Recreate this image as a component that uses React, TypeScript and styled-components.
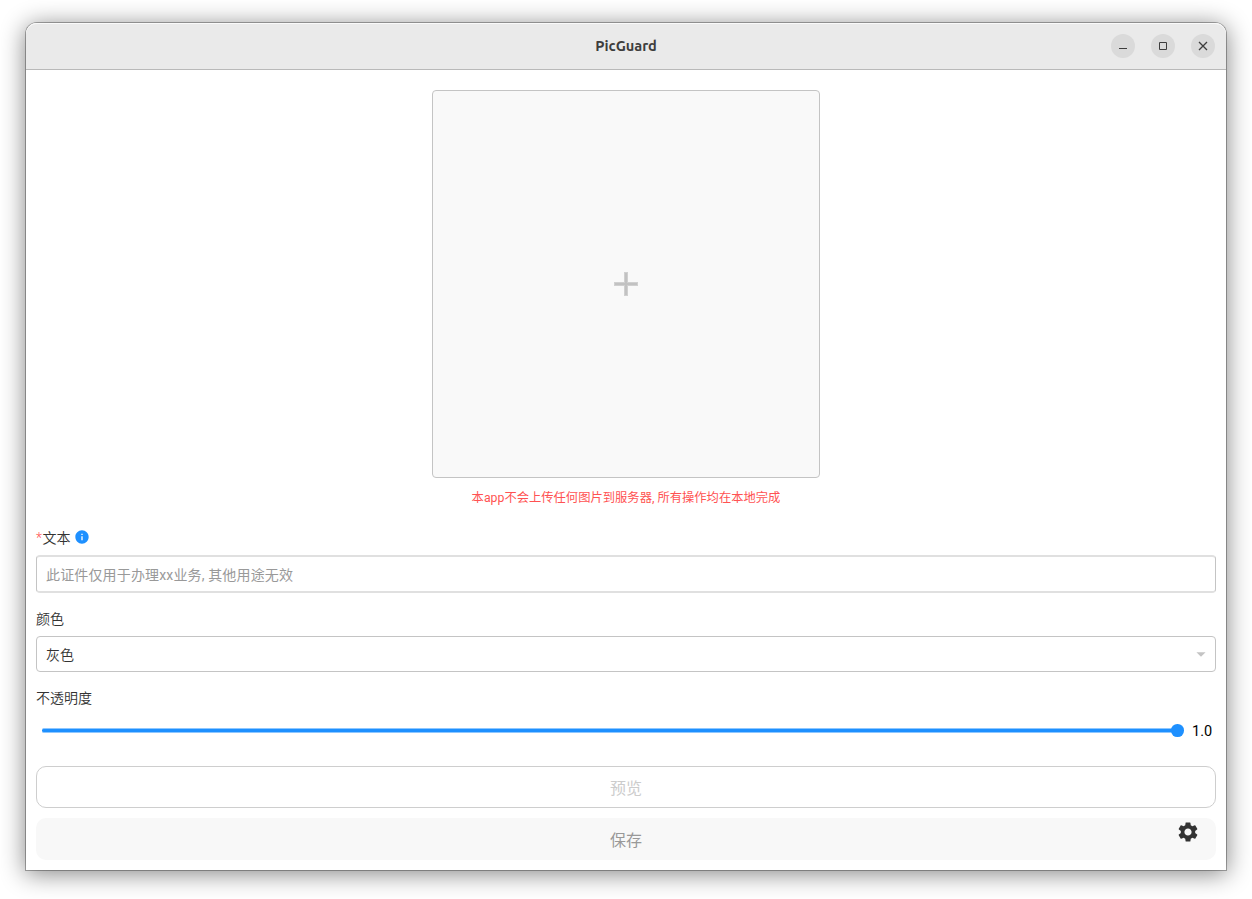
import React from "react";
import styled, { createGlobalStyle } from "styled-components";
import { MdArrowDropDown, MdInfo, MdSettings } from "react-icons/md";

const GlobalStyle = createGlobalStyle`
  *, *::before, *::after { box-sizing: border-box; }
  body {
    margin: 0;
    background: #fff;
    font-family: Roboto, "Noto Sans CJK SC", sans-serif;
    color: #333;
  }
`;

const Desktop = styled.div`
  height: 899px;
  padding: 23px 26px 29px;
  overflow: hidden;
`;

const Window = styled.main`
  height: 847px;
  display: flex;
  flex-direction: column;
  background: #fff;
  border-radius: 11px 11px 0 0;
  box-shadow: 0 0 0 1px rgba(0, 0, 0, 0.3), 0 3px 24px 1px rgba(0, 0, 0, 0.48);
`;

const TitleBar = styled.header`
  height: 47px;
  flex: none;
  display: grid;
  grid-template-columns: 1fr auto 1fr;
  align-items: center;
  padding-right: 11px;
  padding-left: 11px;
  background: #eaeaea;
  border-bottom: 1px solid #b9b9b9;
  border-radius: 11px 11px 0 0;
  box-shadow: inset 0 1px #fafafa;
`;

const Title = styled.h1`
  grid-column: 2;
  margin: 0;
  font: 700 14.6px/20px Ubuntu, "Noto Sans", sans-serif;
  color: #3d3d3d;
`;

const Controls = styled.div`
  display: flex;
  justify-content: flex-end;
  gap: 16px;
`;

const ControlButton = styled.button`
  width: 24px;
  height: 24px;
  padding: 0;
  border: 0;
  border-radius: 50%;
  background: #dadada;
  svg { display: block; }
`;

const Content = styled.section`
  flex: 1;
  display: flex;
  flex-direction: column;
  padding: 20px 10px 10px;
`;

const Upload = styled.button`
  align-self: center;
  width: 388px;
  height: 388px;
  padding: 0;
  display: grid;
  place-items: center;
  background: #f9f9f9;
  border: 1px solid #c4c4c4;
  border-radius: 4px;
`;

const Notice = styled.p`
  margin: 11px 0 0;
  height: 17px;
  text-align: center;
  font-size: 12.3px;
  line-height: 18px;
  color: #ff5252;
`;

const Label = styled.label<{ $top: number }>`
  display: flex;
  align-items: center;
  height: 20px;
  margin-top: ${(p) => p.$top}px;
  font-size: 14px;
  font-weight: 350;
  line-height: 20px;
`;

const Required = styled.span`
  margin-right: 0.6px;
  color: #ff5252;
`;

const InfoIcon = styled(MdInfo)`
  margin: 0 0 2px 3.5px;
  color: #1e90ff;
`;

const TextInput = styled.input`
  width: 100%;
  height: 38px;
  margin-top: 7px;
  padding: 2px 9px 0;
  border: solid;
  border-width: 2px 1px;
  border-color: #e0e0e0 #c4c4c4;
  border-radius: 4px;
  background: #fff;
  font: 14px/20px Roboto, "Noto Sans CJK SC", sans-serif;
  letter-spacing: 0.15px;
  &::placeholder { color: #999; opacity: 1; }
`;

const Select = styled.div`
  display: flex;
  align-items: center;
  justify-content: space-between;
  height: 36px;
  margin-top: 7px;
  padding: 0 3px 0 9px;
  border: 1px solid #c4c4c4;
  border-radius: 4px;
  font-size: 14px;
  font-weight: 350;
  svg { color: #c4c4c4; }
`;

const SliderRow = styled.div`
  display: flex;
  align-items: center;
  height: 19px;
  margin-top: 13px;
  padding: 0 4px 0 6px;
  font-size: 14.5px;
  color: #000;
`;

const Track = styled.div`
  flex: 1;
  height: 5px;
  display: flex;
  align-items: center;
  justify-content: flex-end;
  border: solid #8ec7ff;
  border-width: 1px 0;
  border-radius: 2px;
  background: #1e90ff;
`;

const Thumb = styled.span`
  width: 12.6px;
  height: 12.6px;
  flex: none;
  margin-right: -1px;
  border-radius: 50%;
  background: #1e90ff;
`;

const Value = styled.span`
  width: 20px;
  margin-left: 9px;
  padding-top: 2px;
`;

const Actions = styled.div`
  position: relative;
  display: flex;
  flex-direction: column;
  gap: 10px;
  margin-top: 26px;
`;

const ActionButton = styled.button<{ $filled?: boolean }>`
  height: 42px;
  padding: 4px 0 0;
  border: ${(p) => (p.$filled ? "0" : "1px solid #cecece")};
  border-radius: 10px;
  background: ${(p) => (p.$filled ? "#f8f8f8" : "#fff")};
  color: ${(p) => (p.$filled ? "#999" : "#ccc")};
  font: 16px/24px Roboto, "Noto Sans CJK SC", sans-serif;
`;

const SettingsButton = styled.button`
  position: absolute;
  right: 16px;
  bottom: 16px;
  width: 24px;
  height: 24px;
  padding: 0;
  border: 0;
  background: none;
  color: #333;
  svg { display: block; }
`;

export default function App() {
  return (
    <Desktop>
      <GlobalStyle />
      <Window>
        <TitleBar>
          <Title>PicGuard</Title>
          <Controls>
            <ControlButton aria-label="Minimize">
              <svg width="24" height="24"><path d="M8 14.5h8" stroke="#3d3d3d" /></svg>
            </ControlButton>
            <ControlButton aria-label="Maximize">
              <svg width="24" height="24"><path d="M8.5 8.5h7v7h-7z" fill="none" stroke="#3d3d3d" /></svg>
            </ControlButton>
            <ControlButton aria-label="Close">
              <svg width="24" height="24"><path d="M8 8l8 8M16 8l-8 8" stroke="#3d3d3d" strokeWidth="1.3" /></svg>
            </ControlButton>
          </Controls>
        </TitleBar>
        <Content>
          <Upload aria-label="Add image">
            <svg width="24" height="24">
              <path d="M10 0h4v10h10v4H14v10h-4V14H0v-4h10z" fill="#d0d0d0" />
              <path d="M11 1h2v10h10v2H13v10h-2V13H1v-2h10z" fill="#c2c2c2" />
            </svg>
          </Upload>
          <Notice>本app不会上传任何图片到服务器, 所有操作均在本地完成</Notice>
          <Label $top={22}>
            <Required>*</Required>文本<InfoIcon size={16} />
          </Label>
          <TextInput placeholder="此证件仅用于办理xx业务, 其他用途无效" />
          <Label $top={16}>颜色</Label>
          <Select>
            灰色
            <MdArrowDropDown size={22} />
          </Select>
          <Label $top={16}>不透明度</Label>
          <SliderRow>
            <Track><Thumb /></Track>
            <Value>1.0</Value>
          </SliderRow>
          <Actions>
            <ActionButton>预览</ActionButton>
            <ActionButton $filled>保存</ActionButton>
            <SettingsButton aria-label="Settings"><MdSettings size={24} /></SettingsButton>
          </Actions>
        </Content>
      </Window>
    </Desktop>
  );
}
